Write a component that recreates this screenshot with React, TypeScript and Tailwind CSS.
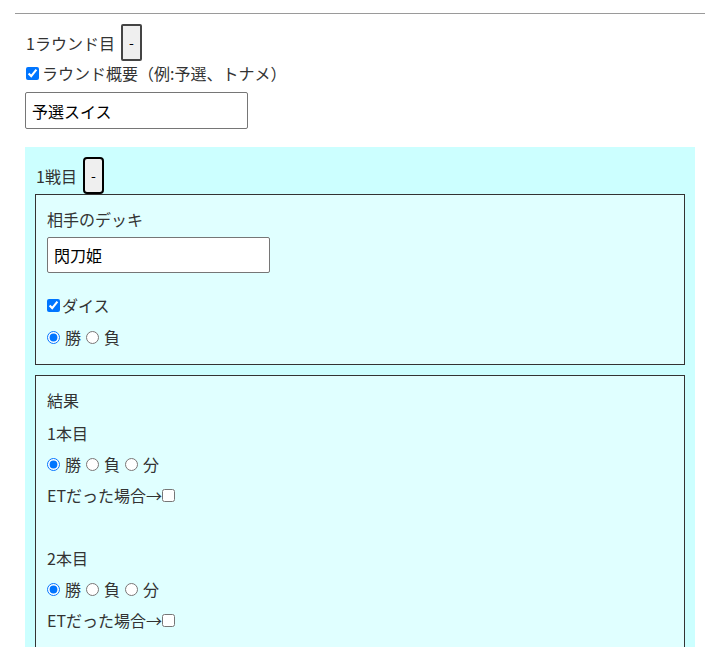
import React from "react";

const font = { fontFamily: '"Noto Sans CJK JP", "Noto Sans", sans-serif' };

const Result = ({ label, name }: { label: string; name: string }) => (
  <div>
    <div className="h-6 leading-6">{label}</div>
    <div className="mt-[7px] flex h-6 items-center">
      <input type="radio" name={name} defaultChecked className="h-[13px] w-[13px]" />
      <span className="ml-[5px] mr-[5px]">勝</span>
      <input type="radio" name={name} className="h-[13px] w-[13px]" />
      <span className="ml-[5px] mr-[5px]">負</span>
      <input type="radio" name={name} className="h-[13px] w-[13px]" />
      <span className="ml-[5px]">分</span>
    </div>
    <div className="mt-[7px] flex h-6 items-center">
      ETだった場合→
      <input type="checkbox" className="h-[13px] w-[13px]" />
    </div>
  </div>
);

export default function App() {
  return (
    <div className="min-h-screen bg-white text-[16px] text-[#333]" style={font}>
      <div className="pl-[15px] pr-[12px] pt-[13px]">
        <hr className="border-t border-[#9a9a9a]" />
        <div className="px-[10px]">
          {/* round header */}
          <div className="mt-[10px] flex items-center">
            <span className="ml-[1px] leading-6">1ラウンド目</span>
            <button className="ml-[6px] h-[37px] w-[21px] rounded-[2px] border-2 border-[#444] bg-[#efefef] text-[14px] text-black">
              -
            </button>
          </div>
          <label className="flex h-6 items-center">
            <input type="checkbox" defaultChecked className="ml-[1px] h-[13px] w-[13px]" />
            <span className="ml-[3px]">ラウンド概要（例:予選、トナメ）</span>
          </label>
          <input
            defaultValue="予選スイス"
            className="mt-[7px] h-[37px] w-[223px] rounded-[2px] border border-[#767676] bg-white px-[6px] text-black"
          />

          {/* match */}
          <div className="mt-[18px] bg-[#ccffff] px-[10px] pb-6 pt-[10px]">
            <div className="flex items-center">
              <span className="ml-[1px] leading-6">1戦目</span>
              <button className="ml-[6px] h-[37px] w-[21px] rounded-[4px] border-2 border-black bg-[#efefef] text-[14px] text-black">
                -
              </button>
            </div>

            <div className="border border-[#333] bg-[#e0ffff] px-[11px] pb-[15px] pt-[12px]">
              <div className="h-6 leading-6">相手のデッキ</div>
              <input
                defaultValue="閃刀姫"
                className="mt-[6px] h-[36px] w-[223px] rounded-[2px] border border-[#767676] bg-white px-[6px] text-black"
              />
              <label className="mt-[20px] flex h-6 items-center">
                <input type="checkbox" defaultChecked className="h-[13px] w-[13px]" />
                <span className="ml-[2px]">ダイス</span>
              </label>
              <div className="mt-[8px] flex h-6 items-center">
                <input type="radio" name="dice" defaultChecked className="h-[13px] w-[13px]" />
                <span className="ml-[5px] mr-[5px]">勝</span>
                <input type="radio" name="dice" className="h-[13px] w-[13px]" />
                <span className="ml-[5px]">負</span>
              </div>
            </div>

            <div className="mt-[10px] border border-[#333] bg-[#e0ffff] px-[11px] pb-[48px] pt-[12px]">
              <div className="mb-[9px] h-6 leading-6">結果</div>
              <Result label="1本目" name="g1" />
              <div className="h-[39px]" />
              <Result label="2本目" name="g2" />
            </div>
          </div>
        </div>
      </div>
    </div>
  );
}
